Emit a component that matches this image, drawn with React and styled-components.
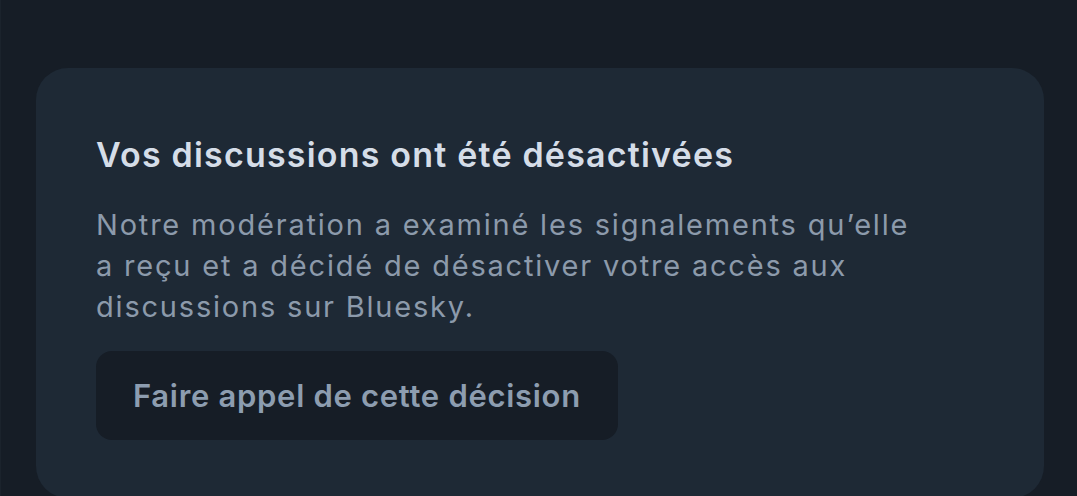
import React from "react";
import styled, { createGlobalStyle } from "styled-components";

const GlobalStyle = createGlobalStyle`
	html, body {
		margin: 0;
		padding: 0;
		background: #161d26;
	}
	body {
		font-family: Inter, "Noto Sans", sans-serif;
	}
`;

export default function App() {
	return (
		<>
			<GlobalStyle />
			<Page>
				<Card>
					<Title>Vos discussions ont été désactivées</Title>
					<Body>
						Notre modération a examiné les signalements qu’elle a reçu et a
						décidé de désactiver votre accès aux discussions sur Bluesky.
					</Body>
					<Button>Faire appel de cette décision</Button>
				</Card>
			</Page>
		</>
	);
}

const Page = styled.div`
	height: 496px;
	box-sizing: border-box;
	padding: 68px 33px 0 35px;
	overflow: hidden;
	border-left: 1px solid #1b232c;
`;

const Card = styled.div`
	display: flex;
	flex-direction: column;
	align-items: flex-start;
	height: 430px;
	box-sizing: border-box;
	padding: 67px 60px 0 60px;
	background: #1e2935;
	border-radius: 32px;
`;

const Title = styled.h1`
	margin: 0;
	font-size: 34px;
	line-height: 40px;
	font-weight: 600;
	color: #d5dde8;
	letter-spacing: 1.2px;
`;

const Body = styled.p`
	margin: 29px 0 0;
	max-width: 830px;
	font-size: 29px;
	line-height: 41px;
	font-weight: 400;
	color: #8c9aab;
	letter-spacing: 1.8px;
`;

const Button = styled.button`
	margin-top: 24px;
	height: 89px;
	padding: 0 37px;
	border: none;
	border-radius: 16px;
	background: #161d26;
	color: #8d9db0;
	font-family: Inter, "Noto Sans", sans-serif;
	font-size: 31px;
	font-weight: 600;
	letter-spacing: 0.7px;
	cursor: pointer;
`;
